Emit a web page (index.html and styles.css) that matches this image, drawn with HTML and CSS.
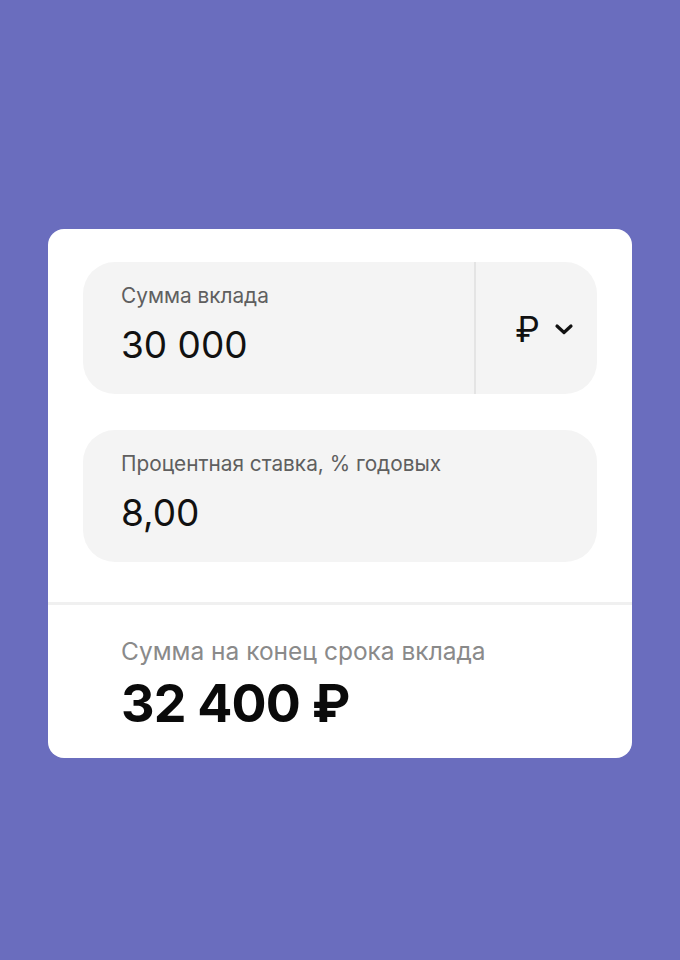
FILE: index.html
```html
<!DOCTYPE html>
<html lang="ru">
<head>
<meta charset="utf-8">
<link rel="stylesheet" href="styles.css">
</head>
<body>
<div class="page">
  <div class="card">
    <div class="inputs">
      <div class="field">
        <div class="field-main">
          <div class="label">Сумма вклада</div>
          <div class="value">30 000</div>
        </div>
        <div class="currency">
          <span class="rub">₽</span>
          <svg class="chev" width="20" height="12" viewBox="0 0 20 12"><path d="M3 3l7 6.5 7-6.5" fill="none" stroke="#111" stroke-width="3.2" stroke-linecap="round" stroke-linejoin="round"/></svg>
        </div>
      </div>
      <div class="field">
        <div class="field-main">
          <div class="label">Процентная ставка, % годовых</div>
          <div class="value">8,00</div>
        </div>
      </div>
    </div>
    <div class="result">
      <div class="result-label">Сумма на конец срока вклада</div>
      <div class="result-value">32 400 ₽</div>
    </div>
  </div>
</div>
</body>
</html>
```

FILE: styles.css
```css
html, body {
  margin: 0;
  padding: 0;
}
body {
  background: #6a6dbe;
  font-family: Inter, "Noto Sans", sans-serif;
  color: #111;
}
.page {
  width: 680px;
  height: 960px;
  padding-top: 229px;
  box-sizing: border-box;
  display: flex;
  flex-direction: column;
  align-items: center;
}
.card {
  width: 584px;
  background: #fff;
  border-radius: 16px;
  overflow: hidden;
}
.inputs {
  padding: 33px 35px 40px;
  display: flex;
  flex-direction: column;
  gap: 36px;
}
.field {
  height: 132px;
  background: #f4f4f4;
  border-radius: 32px;
  display: flex;
}
.field-main {
  flex: 1;
  padding: 22px 38px 0;
}
.label {
  font-size: 20.8px;
  line-height: 24px;
  color: #5f5f5f;
}
.value {
  margin-top: 15px;
  font-size: 37px;
  line-height: 44px;
  color: #111;
}
.currency {
  width: 123px;
  box-sizing: border-box;
  border-left: 2px solid #e4e4e4;
  display: flex;
  align-items: center;
  justify-content: center;
  gap: 14px;
  padding: 2px 0 0 16px;
}
.rub {
  font-size: 35px;
  font-weight: 400;
  line-height: 1;
  color: #111;
}
.chev {
  display: block;
}
.result {
  border-top: 3px solid #f0f0f0;
  padding: 31px 73px 25px;
}
.result-label {
  font-size: 24.5px;
  line-height: 30px;
  color: #8a8a8a;
}
.result-value {
  margin-top: 9px;
  font-size: 52px;
  line-height: 58px;
  font-weight: 700;
  color: #0a0a0a;
  letter-spacing: -0.8px;
}
```
